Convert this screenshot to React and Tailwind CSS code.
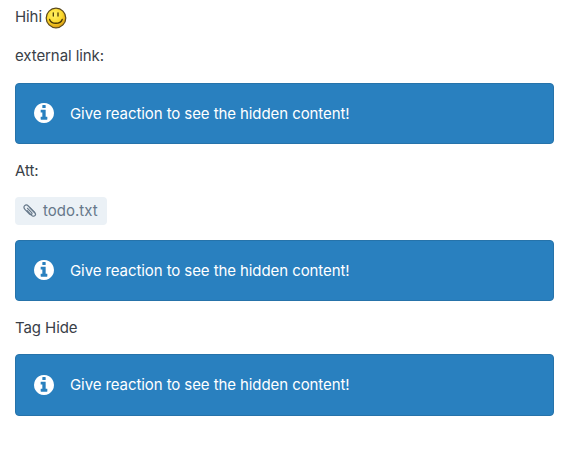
function Smiley() {
  return (
    <svg width="22" height="22" viewBox="0 0 22 22" className="ml-[3px] mt-0.5 shrink-0">
      <defs>
        <radialGradient id="face" cx="42%" cy="34%" r="66%">
          <stop offset="0" stopColor="#fff36a" />
          <stop offset="0.6" stopColor="#fbd82c" />
          <stop offset="1" stopColor="#d99a10" />
        </radialGradient>
      </defs>
      <circle cx="11" cy="11" r="9.8" fill="url(#face)" stroke="#5b4a1c" strokeWidth="1.2" />
      <path d="M8.3 5.8v3.2M13 5.8v3.2" stroke="#4c3a05" strokeWidth="1.3" strokeLinecap="round" />
      <path d="M4.6 12.4c1.8 5.2 10.8 5.2 12.6 0" fill="none" stroke="#4c3a05" strokeWidth="1.4" strokeLinecap="round" />
    </svg>
  )
}

function InfoCircle() {
  return (
    <svg width="20" height="20" viewBox="0 128 1536 1536" fill="currentColor" className="-mt-px mr-4 shrink-0">
      <path d="M1024 1376v-160q0-14-9-23t-23-9h-96v-512q0-14-9-23t-23-9h-320q-14 0-23 9t-9 23v160q0 14 9 23t23 9h96v320h-96q-14 0-23 9t-9 23v160q0 14 9 23t23 9h448q14 0 23-9t9-23zm-128-896v-160q0-14-9-23t-23-9h-192q-14 0-23 9t-9 23v160q0 14 9 23t23 9h192q14 0 23-9t9-23zm640 416q0 209-103 385.5t-279.5 279.5-385.5 103-385.5-103-279.5-279.5-103-385.5 103-385.5 279.5-279.5 385.5-103 385.5 103 279.5 279.5 103 385.5z" />
    </svg>
  )
}

function Clip() {
  return (
    <svg width="14" height="14" viewBox="0 0 14 14" fill="none" stroke="#66788a" strokeWidth="1.2" strokeLinecap="round" strokeLinejoin="round">
      <path d="M4.2 6.6l4.4 4.7c1 1 2.4 1.3 3.3.4s.7-2.2-.3-3.2L5.3 2C4.2.9 2.7.7 1.7 1.7s-.8 2.5.2 3.6l4.6 4.9c.6.6 1.5.8 2.1.2s.4-1.4-.2-2L4.5 4.3" />
      <path d="M7 3.8l4.6 4.7" />
    </svg>
  )
}

function Notice({ className }) {
  return (
    <div className={`flex items-center rounded-[4px] border border-[#2673aa] bg-[#2980bf] pl-[18px] text-white ${className}`}>
      <InfoCircle />
      <span>Give reaction to see the hidden content!</span>
    </div>
  )
}

export default function App() {
  return (
    <div className="h-[450px] w-[570px] overflow-hidden bg-white pl-[15px] pr-4 pt-[5px] font-['Inter',sans-serif] text-[15px] leading-6 tracking-[-0.085px] text-[#394047]">
      <p className="flex h-6 items-center">
        Hihi <Smiley />
      </p>
      <p className="mt-[15px]">external link:</p>
      <Notice className="mt-[15px] h-[61px]" />
      <p className="mt-[15px]">Att:</p>
      <div className="mt-[14px] flex h-7 w-[92px] items-center gap-1.5 rounded-[4px] bg-[#ebf1f6] pl-2 tracking-normal text-[#66788a]">
        <Clip />
        <span>todo.txt</span>
      </div>
      <Notice className="mt-[15px] h-[61px]" />
      <p className="mt-[15px]">Tag Hide</p>
      <Notice className="mt-[14px] h-[62px]" />
    </div>
  )
}
